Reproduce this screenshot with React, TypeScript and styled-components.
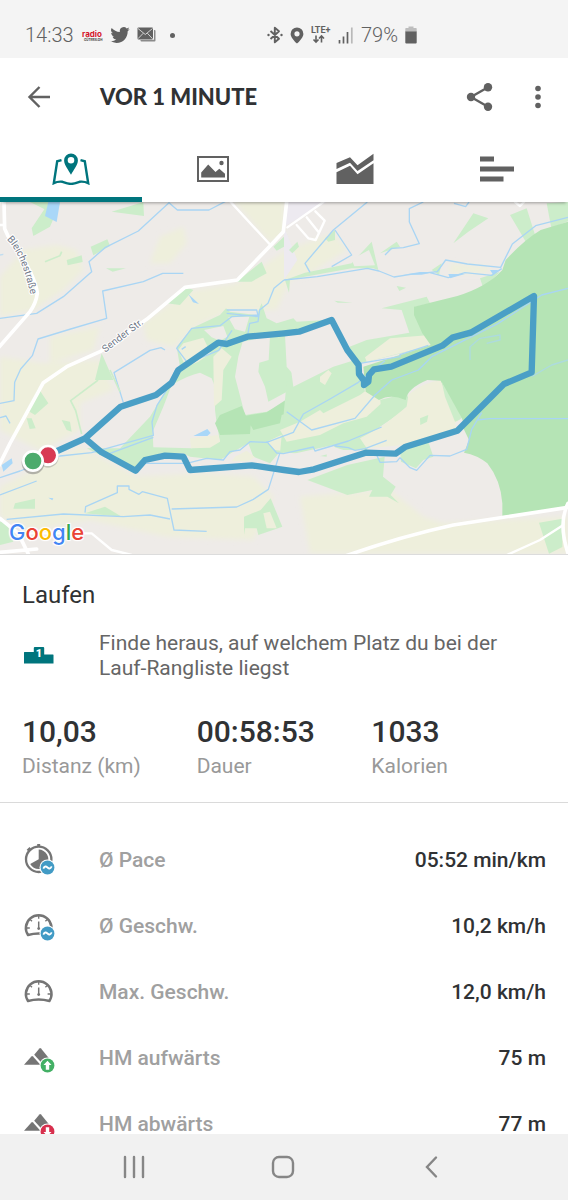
import React from 'react';
import styled, { createGlobalStyle } from 'styled-components';

const teal = '#00757d';
const ink = '#303234';
const iconGray = '#616161';

const GlobalStyle = createGlobalStyle`
  *, *::before, *::after { box-sizing: border-box; }
  body { margin: 0; background: #fff; font-family: Roboto, "Liberation Sans", sans-serif; }
  button { font: inherit; color: inherit; background: none; border: 0; padding: 0; margin: 0; cursor: pointer; }
  svg { display: block; }
`;

const Screen = styled.div`
  display: flex;
  flex-direction: column;
  height: 100vh;
  overflow: hidden;
  background: #fff;
  color: ${ink};
`;

/* ---------- status bar ---------- */

const StatusBar = styled.div`
  flex: none;
  display: flex;
  justify-content: space-between;
  align-items: center;
  height: 58px;
  padding: 12px 151px 0 25px;
  background: #f4f4f4;
  color: ${iconGray};
`;

const StatusGroup = styled.div<{ $gap: number }>`
  display: flex;
  align-items: center;
  gap: ${(p) => p.$gap}px;
`;

const StatusText = styled.span`
  font-size: 20px;
  line-height: 24px;
  font-weight: 300;
`;

const RadioLogo = () => (
  <svg width="22" height="14" viewBox="0 0 22 14" aria-hidden="true">
    <text x="1" y="9" fontFamily="Inter, sans-serif" fontSize="8" fontWeight="700" fill="#d5152b">radio</text>
    <text x="3" y="13" fontFamily="Inter, sans-serif" fontSize="3" fontWeight="700" fill="#3a3a3a">GÜTERSLOH</text>
  </svg>
);

const TwitterIcon = () => (
  <svg width="20" height="20" viewBox="0 0 24 24" fill={iconGray} aria-hidden="true">
    <path d="M23.6 4.9c-.9.4-1.800.6-2.700.8 1-.6 1.700-1.500 2.100-2.600-.9.5-1.900.9-3 1.100a4.700 4.700 0 0 0-8.100 4.300C7.900 8.300 4.400 6.400 2 3.600a4.700 4.700 0 0 0 1.500 6.300c-.8 0-1.500-.2-2.100-.6 0 2.300 1.600 4.200 3.800 4.700-.7.200-1.400.2-2.100.1.6 1.900 2.300 3.200 4.400 3.300A9.500 9.500 0 0 1 .5 19.300 13.400 13.400 0 0 0 7.800 21.500c8.700 0 13.700-7.400 13.400-14.100.9-.7 1.700-1.500 2.400-2.500z" />
  </svg>
);

const MailIcon = () => (
  <svg width="19" height="16" viewBox="0 0 19 16" aria-hidden="true">
    <path d="M17 3h.5a1 1 0 0 1 1 1v9.500a1 1 0 0 1-1 1H4.500a1 1 0 0 1-1-1V13H16a1 1 0 0 0 1-1z" fill="#8a8a8a" />
    <rect x="0.500" y="0.500" width="15.500" height="12" rx="1" fill={iconGray} />
    <path d="M1 1.500l7.300 6 7.200-6M1 11.700l5.300-5.500M15.500 11.700l-5.200-5.500" fill="none" stroke="#dcdcdc" strokeWidth="0.900" />
  </svg>
);

const Dot = styled.i`
  width: 5px;
  height: 5px;
  margin-left: 7px;
  border-radius: 50%;
  background: ${iconGray};
`;

const BluetoothIcon = () => (
  <svg width="16" height="18" viewBox="0 0 16 18" aria-hidden="true">
    <path d="M3.500 5l8.500 7.800-4.200 3.500V1.700L12 5.200 3.500 13" fill="none" stroke={iconGray} strokeWidth="1.900" strokeLinejoin="round" />
    <circle cx="1.500" cy="9" r="1.200" fill={iconGray} />
    <circle cx="14.500" cy="9" r="1.200" fill={iconGray} />
  </svg>
);

const PinIcon = () => (
  <svg width="14" height="17" viewBox="0 0 14 17" aria-hidden="true">
    <path fillRule="evenodd" d="M7 .5A6.400 6.400 0 0 0 .6 6.900C.6 11 7 16.500 7 16.500s6.400-5.500 6.400-9.600A6.400 6.400 0 0 0 7 .5zm0 3.700a2.600 2.600 0 1 1 0 5.200 2.600 2.600 0 0 1 0-5.200z" fill={iconGray} />
  </svg>
);

const LteIcon = () => (
  <svg width="20" height="18" viewBox="0 0 20 18" aria-hidden="true">
    <text x="0" y="7" fontFamily="Roboto, sans-serif" fontSize="9" fontWeight="700" fill={iconGray}>LTE+</text>
    <path d="M5 9.500v6.500M2.500 13.500L5 16.100l2.500-2.600M10.500 16.500V10M8 12.500l2.500-2.600 2.500 2.600" fill="none" stroke={iconGray} strokeWidth="1.600" />
  </svg>
);

const SignalIcon = () => (
  <svg width="16" height="17" viewBox="0 0 16 17" aria-hidden="true">
    <path d="M1.500 13v3.500M5.500 9.500v7M9.500 5v11.500" stroke={iconGray} strokeWidth="1.700" />
    <path d="M13.800 0.500v16" stroke="#b9b9b9" strokeWidth="1.700" />
  </svg>
);

const BatteryIcon = () => (
  <svg width="12" height="18" viewBox="0 0 12 18" aria-hidden="true">
    <path d="M3.500 0.500h5V2H11a.7.7 0 0 1 .7.700V6H.3V2.700A.7.7 0 0 1 1 2h2.500z" fill="#bdbdbd" />
    <path d="M.3 5.500h11.400v11a1 1 0 0 1-1 1H1.300a1 1 0 0 1-1-1z" fill={iconGray} />
  </svg>
);

/* ---------- app bar and tabs ---------- */

const AppBar = styled.header`
  flex: none;
  display: flex;
  align-items: center;
  height: 78px;
  padding: 0 1px 0 23px;
`;

const IconButton = styled.button<{ $width: number }>`
  flex: none;
  display: flex;
  align-items: center;
  justify-content: center;
  width: ${(p) => p.$width}px;
  height: 48px;
`;

const Title = styled.h1`
  flex: 1;
  margin: 0 0 0 45px;
  font-family: Lato, "Liberation Sans", sans-serif;
  font-size: 22px;
  line-height: 32px;
  font-weight: 900;
`;

const Tabs = styled.nav`
  flex: none;
  position: relative;
  z-index: 1;
  display: grid;
  grid-template-columns: repeat(4, 1fr);
  height: 66px;
  background: #fff;
  box-shadow: 0 3px 3px -2px rgba(0, 0, 0, 0.35);
`;

const Tab = styled.button<{ $active?: boolean }>`
  display: flex;
  align-items: center;
  justify-content: center;
  padding-top: 4px;
  border-bottom: 5px solid ${(p) => (p.$active ? teal : 'transparent')};
`;

const MapTabIcon = () => (
  <svg width="38" height="32" viewBox="0 0 38 32" aria-hidden="true">
    <path d="M9.500 7.200L5.200 8.300 1.800 30.200Q6 28.200 10.500 28.800 16 30.800 19 31 22 30.800 27.500 28.800 32 28.200 36.200 30.200L32.800 8.300 28.500 7.200" fill="none" stroke={teal} strokeWidth="2.400" />
    <path fillRule="evenodd" d="M19 .4a6.900 6.900 0 0 0-6.900 7c0 4.800 4.400 9.200 6.900 14.400 2.500-5.200 6.900-9.600 6.900-14.400A6.900 6.900 0 0 0 19 .4zm0 3.600a3.300 3.300 0 1 1 0 6.600A3.300 3.300 0 0 1 19 4z" fill={teal} />
  </svg>
);

const PhotoTabIcon = () => (
  <svg width="32" height="26" viewBox="0 0 32 26" aria-hidden="true">
    <rect x="1" y="1" width="30" height="24" fill="none" stroke={iconGray} strokeWidth="2" />
    <path d="M4.200 21.500v-5L11.200 8.500l7.300 7.500 3.800-3.300 5.700 5v3.800z" fill={iconGray} />
    <circle cx="24.500" cy="7" r="2.200" fill={iconGray} />
  </svg>
);

const ChartTabIcon = () => (
  <svg width="38" height="32" viewBox="0 0 38 32" aria-hidden="true">
    <path d="M.5 10L14 4.300l7.500 8L37.500.8V7.200L21.500 18 14 9.800.5 16z" fill={iconGray} />
    <path d="M.5 19.200l13.500-6.500 7.500 8.600 16-11V31H.5z" fill={iconGray} />
  </svg>
);

const SplitsTabIcon = () => (
  <svg width="34" height="26" viewBox="0 0 34 26" fill={iconGray} aria-hidden="true">
    <path d="M0 .5h14v5H0zM0 10.500h34v5H0zM0 20.500h23.500v5H0z" />
  </svg>
);

/* ---------- map ---------- */

const MapPanel = styled.section`
  flex: none;
  position: relative;
  border-bottom: 1px solid #dcdcdc;
`;

const MapDrawing = styled.svg`
  width: 100%;
  height: auto;
`;

const GoogleMark = styled.div`
  position: absolute;
  left: 9px;
  bottom: 8px;
  font-family: Inter, "Liberation Sans", sans-serif;
  font-size: 22px;
  line-height: 28px;
  font-weight: 500;
  text-shadow: 0 0 2px #fff, 0 0 2px #fff, 1px 1px 1px #fff, -1px -1px 1px #fff, 1px -1px 1px #fff, -1px 1px 1px #fff;
`;

const Letter = styled.span<{ $color: string }>`
  color: ${(p) => p.$color};
`;

const googleLetters: [string, string][] = [
  ['G', '#4285f4'], ['o', '#ea4335'], ['o', '#fbbc05'], ['g', '#4285f4'], ['l', '#34a853'], ['e', '#ea4335'],
];

const land = '#eeebe8';
const field = '#eeefdc';
const meadow = '#ccedca';
const forest = '#b5e4b5';

const route =
  'M145 765L255 715 362 620 468 585 515 548 535 510 655 428 680 432 742 410 852 400 897 395 995 360 1042 450 1076 495 1077 522 1092 542 1092 555 1105 545 1107 525 1122 508 1174 500 1327 437 1357 413 1412 398 1602 288 1595 517 1512 552 1372 692 1217 740 1187 761 1097 758 942 808 897 816 852 810 755 796 570 810 550 770 495 767 435 780 407 812 305 757 255 715';

const TrackMap = () => (
  <MapDrawing viewBox="0 6 1704 1056" role="img" aria-label="Laufstrecke">
    <defs>
      <filter id="soft"><feGaussianBlur stdDeviation="8" /></filter>
      <path id="bleiche" d="M20 118C55 155 72 205 90 275L100 330" />
      <path id="sender" d="M316 458L450 356" />
    </defs>
    <rect y="6" width="1704" height="1059" fill={land} />

    <g fill={field} filter="url(#soft)">
      <path d="M0 230L70 150 170 135 230 150 250 210 190 270 100 330 0 350z" />
      <path d="M480 110l70-30 10 50-50 60-60 0z" />
      <path d="M700 0h152v100l-40 30z" />
      <path d="M430 370L560 275 710 250 860 150 1000 100 1040 150 930 220 870 240 830 330 700 330 600 370 520 440 440 420z" />
      <path d="M150 410l150-30-20 70-130 40z" />
      <path d="M0 470l130 20 170-10 40 90-100 40 0 80-120 60-120-60z" />
      <path d="M240 740l170 90 200-10 150 10 60 60-60 130-260-10-230-50-170 30-100-40 0-90z" />
      <path d="M900 890l130-10 140-10 100 80 60 20 374-20v110H930z" />
      <path d="M1350 190l120 10-10 20-110 0z" />
    </g>
    <path d="M852 80L980 6H860zM852 80l40 100-40 60z" fill="#edeaf0" />

    <g fill={meadow}>
      <path d="M95 85l50-75h35L150 80l-50 28zM90 6h60l-10 25zM335 35L430 6l2 42zM272 140l50-22 8 20-50 28zM200 180l45-14 3 20-45 10zM318 205l60 0-40 10z" />
      <path d="M710 245l75-60 15 35-45 25zM500 310l55-50 25 10-40 45zM285 540l20-80 35 80zM820 140l32-30v30l-22 12z" />
      <path d="M922 840l120-45 112-25-5 60 38 30-15 25 25 25-35-20-55 0 10-20-75 15z" />
      <path d="M867 150l25-25 5 15-20 20zM975 115l30-25v30l-20 5zM1140 160l50-35 10 15zM1360 130l60-90 45 15-60 40zM1530 45l50-20 30 95-30 10zM1640 10l64-4v58l-50 20zM1190 258l28 5-20 10zM1003 302l55 6-45 0z" />
      <path d="M855 240l60-22 140-28 60-65 20 85-15-5-65 0-140 25-45 8-3 40zM1440 235l60-20-50 50zM1295 210l30-20-8 35z" />
      <path d="M80 630l35-65 30 45-40 35zM80 655l15 0 12 30-18 2zM185 660l25 5 5 30-15-5zM45 910l60-14v30l-65 0zM255 940l60-20 50 30zM0 965h20l20 60-40 10zM732 950l50-20 30-35 35 85-72 25-5-20-35 0-3 20zM1617 968l70-12v85l-40 20z" />
    </g>
    <path d="M1055 178l52-28 18 46-62 3z" fill={land} />
    <path d="M790 940l20-5 20 50-30 0z" fill={field} />

    {/* hedges and meadows between the two legs of the run */}
    <g transform="translate(360 300)">
      <path d="M170 140L215 85 300 45 318 25 330 35 410 45 425 10 440 55 470 70 520 55 530 65 620 60V470L480 455 450 490 400 470 385 430 340 455 300 480 210 470 190 460 120 460 60 500 40 515-100 445 0 445 90 350 150 250 180 200z" fill={meadow} />
      <path d="M155 255Q205 225 240 218L275 235 285 260 285 330 290 370 300 425 215 445 100 442 98 395 130 320z" fill={land} />
      <path d="M190 185L175 150 190 130 250 113 272 160 235 185 200 200zM280 170L305 145 335 170 310 210 305 300 282 320zM210 415L295 405 300 425 270 443 213 445zM440 425L495 400 520 360 620 325V430L510 455 465 450zM345 470l35-18 25 20-20 12-50 0z" fill={field} />
      <path d="M500 420l90-50 12 5-80 50z" fill={meadow} />
      <path d="M252 90L310 78 322 110 300 122 275 112zM325 52L388 50 375 95 345 88zM368 125L450 108 446 180 418 188 415 215 435 260 445 305 515 268 545 285 440 335 375 345 345 230 355 170zM495 105L620 90V200L540 247 500 200z" fill={land} />
      <path d="M300 345L365 318 378 347 440 337 520 285 540 300 530 330 485 345 480 370 400 390 392 376 390 402 300 405 285 370z" fill={forest} />
    </g>
    <g transform="translate(900 0)">
      <path d="M-40 545L100 460 200 420 328 398 305 330 245 325 380 290 390 310 345 320 370 400 385 440 180 490 195 575 240 600 320 580 330 610 300 640 240 680 200 750 130 750 100 740-60 760z" fill={meadow} />
      <path d="M-40 410L90 370 165 480 100 500-20 560zM-60 770L100 735 110 755-60 800z" fill={land} />
      <path d="M60 530l25-20 10 10-20 35-15-10zM0 665L60 630 70 640 180 585 200 570 240 590 242 612 200 650 130 670 60 705-40 725-60 690zM195 472L270 415 390 405 388 437 300 460 200 485zM325 585Q370 545 430 540L485 655 470 690 310 735 200 745 180 715 245 680 320 620z" fill={field} />
      <path d="M360 655l25-10-4 20-20 10z" fill={meadow} />
      <path d="M300 750l85-25 15 45-30 10-22 25-45-20z" fill={meadow} />
      <path d="M392 725L475 690 497 742 440 765 405 765z" fill={land} />
    </g>

    <path fill={forest} d="M1242 320L1372 288Q1462 260 1507 210L1517 180Q1572 120 1622 90L1704 65V922L1507 948V910Q1502 840 1462 790 1432 765 1392 758L1407 720 1322 542 1282 540Q1222 565 1217 600 1172 580 1137 600L1097 575 1090 500 1292 435 1267 400 1242 345z" />
    <path d="M1325 545l62 112-22 8-30-75z" fill={meadow} />
    <path d="M1365 670l20-16 4 10-17 26z" fill={land} />

    <g fill="#a9d7f8">
      <path d="M145 6h35l-10 60-35-18zM565 282l32 30-18-5zM580 708l42-21 10 12-10 9zM5 795l30-20 3 15-28 25zM145 893l15 2-3 6zM1345 222l50 0-45 13zM1470 210l25 0-15 15zM1210 224l50-8 45 0-40 8z" />
    </g>
    <g fill="none" stroke="#a9d5f4" strokeWidth="4" strokeLinejoin="round">
      <path d="M0 355l110-15 80-50 85-75-8-30 48-42 100-50 92-85 25 22h95l50-26" />
      <path d="M550 220h-62l-58 25-122 28 12 82-108 32-98 30-17 50-35 40-18 40-2 55-42 8" />
      <path d="M495 450l-12-7-33 8-108 67 28 90M30 670l-12-22-18 5" />
      <path d="M0 833l60-20 120-45 95-10 185-52-4-40 15-50 35-55 20-50 70-35 60-25 40-60" />
      <path d="M330 760l130-48" />
      <path d="M0 885l110-42M20 958l170-16 180 8 80-5 60 12M255 938l2-18 95-42 0-20 35 0 0 10 30 15 10-8 75 20 20 95 98 4M515 927l195-6 50-23 45-30 35-110" />
      <path d="M1102 6L1000 90 915 190l15 27M1005 90l50 75-60 35" />
      <path d="M1270 6l-42 20v40l30 65-48 12-35 2-20 20M1362 10l35 10 10-14" />
      <path d="M852 240l100-10 150-25 35 8 45 18 50-8 80-8 25-35 65 12 100 10 35-70 70-55 97-25" />
      <path d="M1290 218l55 15 50-15 80 8 30-20" />
      <path d="M852 240l-30 25-18 45-25 20-5 35-25 5-5 30M680 330l90 0 5 20-95-10M560 485l-30-40 45-60 85-8 35-27 80-5M545 448l12-8" />
      <path d="M430 790l130 0 60-15 50 5 20-25 30-5 30-25 50 2 80-30 30-55 80-45 85-50 80-65" />
      <path d="M860 635l75 55 130-35 60-70 50-45 80-30 40-40 200-100 130-85 79-20" />
      <path d="M800 724l30 35 20 2 90-20 5 12 100-30 100-42M1005 738l40 5 20 8 30-5 65-25M1130 765l10 22 50-2 10-12 30 30 20 8 40-45 60 2 50-20 15-60 30-50M1430 660l40-4 234 0" />
      <path d="M1410 480l0-40 30-25 60-10 0 15-40 10M1595 530l60-35 49-15M0 165l10-2" opacity=".65" />
      <path d="M1080 490l120-20 0-6 85-28" />
    </g>

    <path fill="none" stroke={meadow} strokeWidth="5" d="M245 702l-18-70-15-30 80-60 20-40M135 185l45-18 5-12M330 510l30 65" />

    <g fill="none" stroke="#fff" strokeLinejoin="round" strokeLinecap="round">
      <g strokeWidth="11">
        <path d="M12 6l2 80 10 22Q105 220 112 280q-4 30-22 55L-6 445" />
        <path d="M-10 810L30 730 130 548 200 500 300 455 440 358 555 262 712 240 808 140 850 95 860 6" />
        <path d="M1030 1070q170-60 330-95l344-53M1704 910q-30 60 0 150" />
        <path d="M0 955l55 45 30 62M0 1057l110-10" />
      </g>
      <g strokeWidth="7">
        <path d="M692 6l120 130M0 75h12M862 82L970 6M90 1020l-5-20 190 0 60 50 60 15M1510 1070l110-50 70-45M1545 6l15 12 12-12" />
        <path d="M890 75l35 40 22 5 27-58-28-28M920 52l36 45" />
      </g>
    </g>

    <g fontFamily="Roboto, sans-serif" fontSize="30" fill="#6f7787" stroke="#fff" strokeWidth="6" paintOrder="stroke">
      <text><textPath href="#bleiche">Bleichestraße</textPath></text>
      <text><textPath href="#sender">Sender Str.</textPath></text>
    </g>

    <path d={route} fill="none" stroke="#4a9fc6" strokeWidth="19" strokeLinejoin="round" />
    <g stroke="#fff" strokeWidth="8">
      <circle cx="144" cy="771" r="32" fill="#777" stroke="none" opacity=".35" />
      <circle cx="144" cy="766" r="28" fill="#d83a54" />
      <circle cx="99" cy="789" r="34" fill="#666" stroke="none" opacity=".45" />
      <circle cx="99" cy="783" r="29" fill="#4dab6d" />
    </g>
  </MapDrawing>
);

/* ---------- summary ---------- */

const Content = styled.main`
  flex: 1;
  min-height: 0;
  overflow-y: auto;
  scrollbar-width: none;
`;

const Summary = styled.section`
  padding: 24px 22px 21px;
  border-bottom: 1px solid #dadada;
`;

const Sport = styled.h2`
  margin: 0;
  font-size: 24px;
  line-height: 32px;
  font-weight: 400;
`;

const Ranking = styled.a`
  display: grid;
  grid-template-columns: 75px 1fr;
  align-items: center;
  margin-top: 20px;
  padding-left: 2px;
  font-size: 21px;
  line-height: 25px;
  color: #666;
  text-decoration: none;
`;

const Totals = styled.dl`
  display: grid;
  grid-template-columns: repeat(3, 1fr);
  margin: 31px 0 0;
`;

const Total = styled.div`
  display: flex;
  flex-direction: column-reverse;
`;

const TotalValue = styled.dd`
  margin: 0;
  font-size: 30px;
  line-height: 40px;
  font-weight: 500;
`;

const TotalLabel = styled.dt`
  font-size: 21px;
  line-height: 29px;
  color: #999;
`;

const PodiumIcon = () => (
  <svg width="30" height="20" viewBox="0 0 30 20" aria-hidden="true">
    <path d="M.5 6h9.300V2q0-1 1-1h8.400q1 0 1 1v6.500h8.800q.5 0 .5.500v8.500H0V6.500Q0 6 .5 6z" fill={teal} />
    <text x="15" y="11" textAnchor="middle" fontFamily="Roboto, sans-serif" fontSize="11" fontWeight="900" fill="#fff">1</text>
  </svg>
);

/* ---------- metric rows ---------- */

const Metrics = styled.dl`
  margin: 0;
  padding: 24px 22px 0;
`;

const Metric = styled.div`
  display: flex;
  align-items: center;
  height: 66px;
  font-size: 21px;
  font-weight: 500;
`;

const MetricName = styled.dt`
  flex: 1;
  display: flex;
  align-items: center;
  gap: 43px;
  color: #a0a0a0;
`;

const MetricValue = styled.dd`
  margin: 0;
`;

const metricGray = '#757575';

const Badge = ({ kind }: { kind: 'average' | 'up' | 'down' }) => {
  const color = { average: '#429bc5', up: '#43b065', down: '#d72f4d' }[kind];
  return (
    <g>
      <circle cx="25.500" cy="23.500" r="8" fill="#fff" />
      <circle cx="25.500" cy="23.500" r="6.900" fill={color} />
      {kind === 'average' && (
        <path d="M21.300 24.600c1.300-2.700 2.700-2.500 4.200-1.100s2.900 1.600 4.200-1.100" fill="none" stroke="#fff" strokeWidth="1.800" />
      )}
      {kind === 'up' && <path d="M25.500 18.800l4 4.200h-2.300v4.800h-3.400V23h-2.300z" fill="#fff" />}
      {kind === 'down' && <path d="M25.500 28.200l4-4.200h-2.300v-4.800h-3.400V24h-2.300z" fill="#fff" />}
    </g>
  );
};

const Stopwatch = () => (
  <g>
    <circle cx="16.700" cy="15.300" r="12.700" fill="none" stroke={metricGray} strokeWidth="2.300" />
    <path d="M15.200 0h3v3h-3zM4.700 5.700l2.800-2.600 1.400 1.400-2.700 2.700z" fill={metricGray} />
    <path d="M16.700 15.300V5.600a9.700 9.700 0 1 1-8.500 14.500z" fill={metricGray} />
  </g>
);

const Gauge = () => (
  <g fill="none" stroke={metricGray}>
    <path d="M6 25A12.800 12.800 0 1 1 27.400 25Q16.700 22 6 25z" strokeWidth="2.500" strokeLinejoin="round" />
    <path d="M16.700 5.500v3.200M4.800 18h3M25.600 18h3M8.200 9.500l1.800 1.800M25.200 9.500l-1.800 1.800" strokeWidth="1.300" />
    <path d="M16.700 11.500v7" strokeWidth="1.500" />
    <circle cx="16.700" cy="18.600" r="1.400" fill={metricGray} stroke="none" />
  </g>
);

const Mountains = () => (
  <g fill={metricGray}>
    <path d="M2 22.800l7.400-8.400q.8-.9 1.600 0l7.400 8.400z" />
    <path d="M12.200 12.700l5.200-6.200q.8-.9 1.600 0L28 17.500v5.300h-6.600z" />
  </g>
);

const metrics: { name: string; value: string; shape: React.FC; badge?: 'average' | 'up' | 'down' }[] = [
  { name: 'Ø Pace', value: '05:52 min/km', shape: Stopwatch, badge: 'average' },
  { name: 'Ø Geschw.', value: '10,2 km/h', shape: Gauge, badge: 'average' },
  { name: 'Max. Geschw.', value: '12,0 km/h', shape: Gauge },
  { name: 'HM aufwärts', value: '75 m', shape: Mountains, badge: 'up' },
  { name: 'HM abwärts', value: '77 m', shape: Mountains, badge: 'down' },
];

/* ---------- system navigation ---------- */

const NavBar = styled.footer`
  flex: none;
  display: grid;
  grid-template-columns: repeat(3, 1fr);
  height: 66px;
  padding: 0 62px 0 60px;
  background: #f1f1f1;
`;

const NavButton = styled.button`
  display: flex;
  align-items: center;
  justify-content: center;
`;

const NavIcon = ({ d }: { d: string }) => (
  <svg width="24" height="24" viewBox="0 0 24 24" fill="none" stroke="#868686" strokeWidth="2.400" strokeLinecap="round" aria-hidden="true">
    <path d={d} />
  </svg>
);

export default function App() {
  return (
    <Screen>
      <GlobalStyle />
      <StatusBar>
        <StatusGroup $gap={7}>
          <StatusText>14:33</StatusText>
          <RadioLogo />
          <TwitterIcon />
          <MailIcon />
          <Dot />
        </StatusGroup>
        <StatusGroup $gap={7}>
          <BluetoothIcon />
          <PinIcon />
          <LteIcon />
          <SignalIcon />
          <StatusText>79%</StatusText>
          <BatteryIcon />
        </StatusGroup>
      </StatusBar>

      <AppBar>
        <IconButton $width={32} aria-label="Zurück">
          <svg width="24" height="24" viewBox="0 0 24 24" fill="none" stroke={iconGray} strokeWidth="2.400" aria-hidden="true">
            <path d="M23 12H3M12.500 2L2.500 12l10 10" />
          </svg>
        </IconButton>
        <Title>VOR 1 MINUTE</Title>
        <IconButton $width={58} aria-label="Teilen">
          <svg width="28" height="28" viewBox="0 0 28 28" fill={iconGray} aria-hidden="true">
            <path d="M22 4.300L5 14l17 9.700" fill="none" stroke={iconGray} strokeWidth="2.400" />
            <circle cx="22" cy="4.300" r="4.200" />
            <circle cx="5" cy="14" r="4.200" />
            <circle cx="22" cy="23.700" r="4.200" />
          </svg>
        </IconButton>
        <IconButton $width={58} aria-label="Mehr">
          <svg width="6" height="24" viewBox="0 0 6 24" fill={iconGray} aria-hidden="true">
            <circle cx="3" cy="3.500" r="2.800" />
            <circle cx="3" cy="12" r="2.800" />
            <circle cx="3" cy="20.500" r="2.800" />
          </svg>
        </IconButton>
      </AppBar>

      <Tabs>
        <Tab $active aria-label="Karte" aria-current="page"><MapTabIcon /></Tab>
        <Tab aria-label="Fotos"><PhotoTabIcon /></Tab>
        <Tab aria-label="Diagramm"><ChartTabIcon /></Tab>
        <Tab aria-label="Zwischenzeiten"><SplitsTabIcon /></Tab>
      </Tabs>

      <Content>
        <MapPanel>
          <TrackMap />
          <GoogleMark>
            {googleLetters.map(([char, color], i) => (
              <Letter key={i} $color={color}>{char}</Letter>
            ))}
          </GoogleMark>
        </MapPanel>

        <Summary>
          <Sport>Laufen</Sport>
          <Ranking href="#rangliste">
            <PodiumIcon />
            <span>Finde heraus, auf welchem Platz du bei der Lauf-Rangliste liegst</span>
          </Ranking>
          <Totals>
            <Total><TotalLabel>Distanz (km)</TotalLabel><TotalValue>10,03</TotalValue></Total>
            <Total><TotalLabel>Dauer</TotalLabel><TotalValue>00:58:53</TotalValue></Total>
            <Total><TotalLabel>Kalorien</TotalLabel><TotalValue>1033</TotalValue></Total>
          </Totals>
        </Summary>

        <Metrics>
          {metrics.map(({ name, value, shape: Shape, badge }) => (
            <Metric key={name}>
              <MetricName>
                <svg width="34" height="32" viewBox="0 0 34 32" aria-hidden="true">
                  <Shape />
                  {badge && <Badge kind={badge} />}
                </svg>
                {name}
              </MetricName>
              <MetricValue>{value}</MetricValue>
            </Metric>
          ))}
        </Metrics>
      </Content>

      <NavBar>
        <NavButton aria-label="Letzte Apps"><NavIcon d="M3 2v20M12 2v20M21 2v20" /></NavButton>
        <NavButton aria-label="Startseite"><NavIcon d="M8 2h8a6 6 0 0 1 6 6v8a6 6 0 0 1-6 6H8a6 6 0 0 1-6-6V8a6 6 0 0 1 6-6z" /></NavButton>
        <NavButton aria-label="Zurück"><NavIcon d="M16 2.500L7 12l9 9.500" /></NavButton>
      </NavBar>
    </Screen>
  );
}
